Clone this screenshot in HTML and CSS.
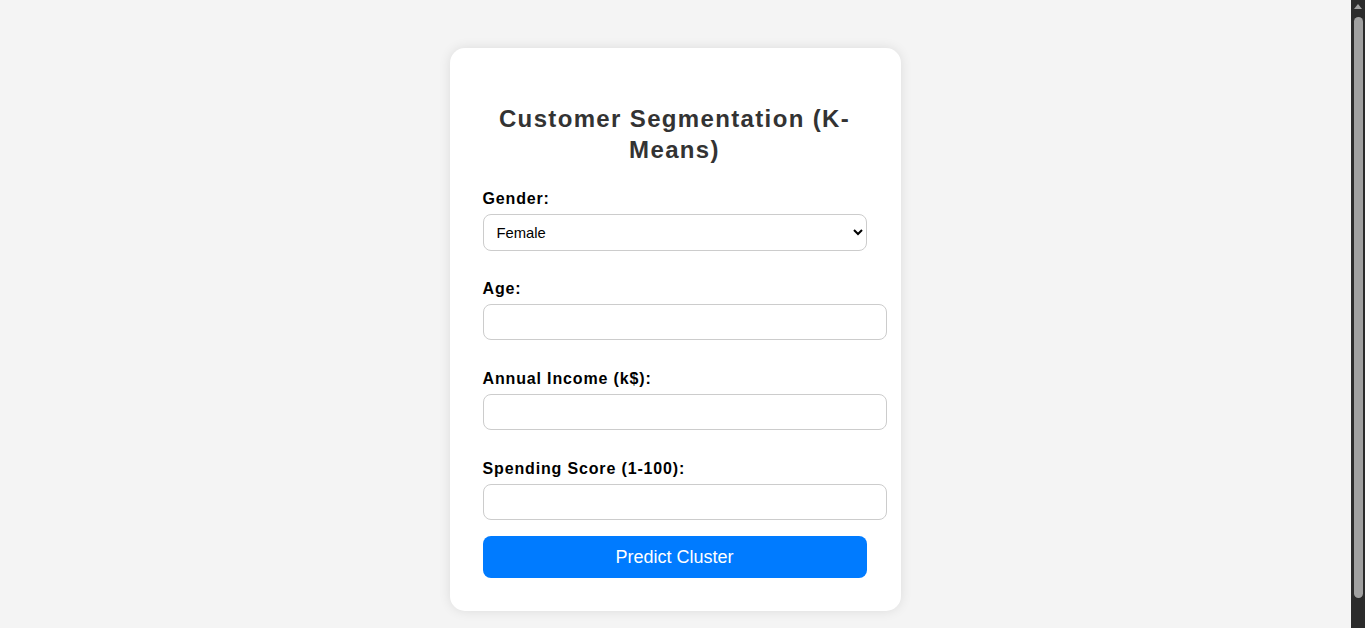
FILE: index.html
```html
<!DOCTYPE html>
<html lang="en">
<head>
<meta charset="utf-8">
<title>Customer Segmentation (K-Means)</title>
<link rel="stylesheet" href="styles.css">
</head>
<body>
<div class="card">
  <h2 class="title">Customer Segmentation (K-Means)</h2>
  <form class="form">
    <label class="label" for="gender">Gender:</label>
    <select class="select" id="gender">
      <option>Female</option>
      <option>Male</option>
    </select>
    <label class="label" for="age">Age:</label>
    <input class="input" type="number" id="age">
    <label class="label" for="income">Annual Income (k$):</label>
    <input class="input" type="number" id="income">
    <label class="label" for="score">Spending Score (1-100):</label>
    <input class="input input-last" type="number" id="score">
    <button class="button" type="button">Predict Cluster</button>
  </form>
</div>
<div class="scrollbar" aria-hidden="true">
  <div class="scroll-arrow"></div>
  <div class="scroll-thumb"></div>
</div>
</body>
</html>
```

FILE: styles.css
```css
html {
  background: #f4f4f4;
}
body {
  margin: 0;
  padding: 48px 15px 42px 0;
  background: #f4f4f4;
  font-family: "Liberation Sans", Arial, sans-serif;
}
.scrollbar {
  position: fixed;
  top: 0;
  right: 0;
  width: 14px;
  height: 100vh;
  background: #2b2b2b;
}
.scroll-arrow {
  position: absolute;
  top: 4px;
  left: 3px;
  width: 0;
  height: 0;
  border-left: 4px solid transparent;
  border-right: 4px solid transparent;
  border-bottom: 5px solid #a0a0a0;
}
.scroll-thumb {
  position: absolute;
  top: 17px;
  left: 3px;
  width: 9px;
  height: 581px;
  border-radius: 5px;
  background: #a0a0a0;
}
.card {
  box-sizing: border-box;
  width: 451px;
  margin: 0 auto;
  padding: 33px 34px 33px 33px;
  background: #fff;
  border-radius: 15px;
  box-shadow: 0 0 12px rgba(0, 0, 0, 0.1);
}
.title {
  margin: 22px 0 26px;
  color: #333;
  font-size: 24px;
  line-height: 31px;
  letter-spacing: 1.35px;
  text-align: center;
  font-weight: bold;
}
.form {
  display: flex;
  flex-direction: column;
  align-items: flex-start;
}
.label {
  display: block;
  font-size: 16px;
  font-weight: bold;
  color: #000;
  line-height: 16px;
  letter-spacing: 0.85px;
  margin-bottom: 7px;
}
.select {
  box-sizing: border-box;
  width: 100%;
  height: 37px;
  padding: 0 9px;
  border: 1px solid #ccc;
  border-radius: 8px;
  background: #fff;
  font-family: "Liberation Sans", Arial, sans-serif;
  font-size: 14.8px;
  color: #000;
  margin-bottom: 30px;
}
.input {
  box-sizing: border-box;
  width: calc(100% + 20px);
  height: 36px;
  padding: 0 10px;
  border: 1px solid #ccc;
  border-radius: 8px;
  background: #fff;
  font-family: "Liberation Sans", Arial, sans-serif;
  font-size: 13.33px;
  margin-bottom: 31px;
}
.input-last {
  margin-bottom: 16px;
}
.button {
  width: 100%;
  height: 42px;
  border: none;
  border-radius: 8px;
  background: #007bff;
  color: #fff;
  font-family: "Liberation Sans", Arial, sans-serif;
  font-size: 18px;
  cursor: pointer;
}
```
